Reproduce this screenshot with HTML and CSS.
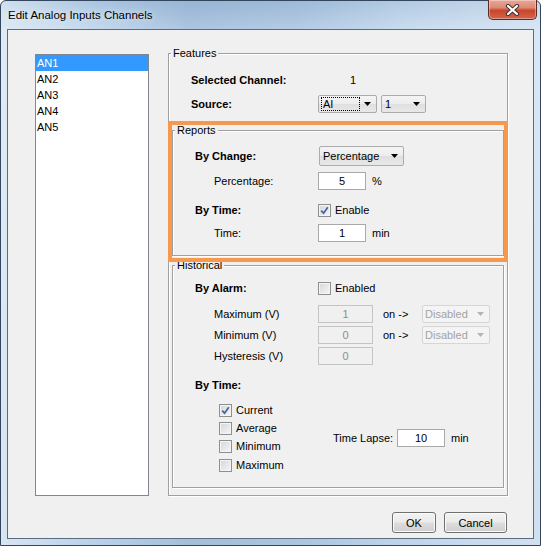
FILE: index.html
```html
<!DOCTYPE html>
<html lang="en-US">
  <head>
    <title>Edit Analog Inputs Channels</title>
    <link rel="stylesheet" href="styles.css">
  </head>
  <body>
    <div class="window">
      <div class="titlebar">
        <span class="title">Edit Analog Inputs Channels</span>
        <button class="close" type="button" aria-label="Close">
          <svg width="15" height="12" viewBox="0 0 15 12">
            <path d="M3 2 L12 10 M12 2 L3 10" stroke="#3b3034" stroke-width="4.2" stroke-linecap="round"/>
            <path d="M3 2 L12 10 M12 2 L3 10" stroke="#fff" stroke-width="2.2" stroke-linecap="round"/>
          </svg>
        </button>
      </div>

      <div class="client">
        <div class="main">
          <ul class="channels">
            <li class="selected">AN1</li>
            <li>AN2</li>
            <li>AN3</li>
            <li>AN4</li>
            <li>AN5</li>
          </ul>

          <fieldset class="group features">
            <legend>Features</legend>
            <div class="row tall sp-11">
              <span class="label bold">Selected Channel:</span>
              <span class="value">1</span>
            </div>
            <div class="row tall sp-4">
              <span class="label bold">Source:</span>
              <span class="combo combo-ai"><span class="focus">AI</span><svg class="arrow" width="7" height="4"><polygon points="0,0 7,0 3.5,4" fill="#000"/></svg></span>
              <span class="combo combo-num">1<svg class="arrow" width="7" height="4"><polygon points="0,0 7,0 3.5,4" fill="#000"/></svg></span>
            </div>

            <div class="highlight">
              <fieldset class="group reports">
                <legend>Reports</legend>
                <div class="row tall">
                  <span class="label bold">By Change:</span>
                  <span class="combo combo-mode">Percentage<svg class="arrow" width="7" height="4"><polygon points="0,0 7,0 3.5,4" fill="#000"/></svg></span>
                </div>
                <div class="row sp-6">
                  <span class="label sub">Percentage:</span>
                  <input class="field" type="text" value="5">
                  <span class="unit">%</span>
                </div>
                <div class="row sp-11">
                  <span class="label bold">By Time:</span>
                  <span class="check checked"><svg width="11" height="11"><path d="M2.2 5.6 L4.6 8.2 L8.8 2.2" fill="none" stroke="#47639c" stroke-width="1.7"/></svg></span>
                  <span class="check-text">Enable</span>
                </div>
                <div class="row sp-5">
                  <span class="label sub">Time:</span>
                  <input class="field" type="text" value="1">
                  <span class="unit">min</span>
                </div>
              </fieldset>
            </div>

            <fieldset class="group historical">
              <legend>Historical</legend>
              <div class="row">
                <span class="label bold">By Alarm:</span>
                <span class="check"></span>
                <span class="check-text">Enabled</span>
              </div>
              <div class="row sp-8">
                <span class="label sub">Maximum (V)</span>
                <input class="field wide" type="text" value="1" disabled>
                <span class="on">on -&gt;</span>
                <span class="combo combo-off">Disabled<svg class="arrow" width="7" height="4"><polygon points="0,0 7,0 3.5,4" fill="#b4b4b4"/></svg></span>
              </div>
              <div class="row sp-3">
                <span class="label sub">Minimum (V)</span>
                <input class="field wide" type="text" value="0" disabled>
                <span class="on">on -&gt;</span>
                <span class="combo combo-off">Disabled<svg class="arrow" width="7" height="4"><polygon points="0,0 7,0 3.5,4" fill="#b4b4b4"/></svg></span>
              </div>
              <div class="row sp-3">
                <span class="label sub">Hysteresis (V)</span>
                <input class="field wide" type="text" value="0" disabled>
              </div>
              <div class="row sp-11">
                <span class="label bold">By Time:</span>
              </div>
              <div class="lapse">
                <div class="checks">
                  <div class="row">
                    <span class="check checked"><svg width="11" height="11"><path d="M2.2 5.6 L4.6 8.2 L8.8 2.2" fill="none" stroke="#47639c" stroke-width="1.7"/></svg></span>
                    <span class="check-text">Current</span>
                  </div>
                  <div class="row">
                    <span class="check"></span>
                    <span class="check-text">Average</span>
                  </div>
                  <div class="row">
                    <span class="check"></span>
                    <span class="check-text">Minimum</span>
                  </div>
                  <div class="row sp-1">
                    <span class="check"></span>
                    <span class="check-text">Maximum</span>
                  </div>
                </div>
                <span class="lapse-label">Time Lapse:</span>
                <input class="field" type="text" value="10">
                <span class="unit">min</span>
              </div>
            </fieldset>
          </fieldset>
        </div>

        <div class="buttons">
          <button class="btn ok" type="button">OK</button>
          <button class="btn cancel" type="button">Cancel</button>
        </div>
      </div>
    </div>
  </body>
</html>
```

FILE: styles.css
```css
* {
  box-sizing: border-box;
}

body {
  margin: 0;
  font-family: "Liberation Sans", Arial, sans-serif;
  font-size: 11px;
  color: #000;
}

/* aero frame */
.window {
  width: 541px;
  height: 546px;
  padding: 0 6px 6px;
  border: 1px solid #34465b;
  border-radius: 6px 6px 0 0;
  background:
    linear-gradient(90deg, rgba(255,255,255,.45) 0, rgba(255,255,255,0) 18%, rgba(70,110,160,.18) 35%, rgba(70,110,160,.12) 55%, rgba(255,255,255,.1) 75%, rgba(255,255,255,.35) 100%),
    linear-gradient(#a9c4e0, #c6daee 30px, #b9d0e8 100%);
}

.titlebar {
  display: flex;
  align-items: flex-start;
  height: 28px;
}

.title {
  padding-left: 1px;
  line-height: 28px;
  font-size: 11.5px;
  text-shadow: 0 0 6px rgba(255,255,255,.9);
}

.close {
  display: flex;
  align-items: center;
  justify-content: center;
  width: 49px;
  height: 20px;
  margin: -1px -3px 0 auto;
  padding: 0 0 0 0;
  border: 1px solid #5b2a22;
  border-top: none;
  border-radius: 0 0 5px 5px;
  background: linear-gradient(#e9a797 0%, #dc8a75 40%, #c7462c 55%, #d2664a 100%);
  box-shadow: inset 0 0 0 1px rgba(255,255,255,.35);
}

.client {
  display: flex;
  flex-direction: column;
  height: 510px;
  border: 1px solid #596c82;
  background: #f0f0f0;
}

.main {
  display: flex;
  align-items: flex-start;
}

.channels {
  width: 114px;
  height: 442px;
  margin: 24px 0 0 27px;
  padding: 0;
  list-style: none;
  border: 1px solid #828790;
  background: #fff;
}

.channels li {
  height: 16px;
  padding-left: 1px;
  line-height: 16px;
}

.channels li.selected {
  background: #3399ff;
  color: #fff;
}

/* etched group boxes */
.group {
  min-width: 0;
  margin: 0;
  padding: 0;
  border: 1px solid #a0a0a0;
  box-shadow: inset 1px 1px 0 #fff, 1px 1px 0 #fff;
}

.group legend {
  margin-left: 2px;
  padding: 0 2px;
  line-height: 11px;
  background: #f0f0f0;
}

.features {
  width: 340px;
  margin: 18px 0 0 19px;
  padding: 0 0 7px 22px;
}

.features > legend {
  margin-left: -20px;
}

.features > .row .label {
  width: 127px;
}

.value {
  margin-left: 32px;
}

.highlight {
  margin: 11px 3px 0 -19px;
  padding-bottom: 2px;
  outline: 4px solid #f7984c;
}

.reports {
  padding: 10px 0 13px 22px;
}

.historical {
  margin: 2px 3px 0 -19px;
  padding: 8px 0 13px 22px;
}

.reports > legend,
.historical > legend {
  margin-left: -20px;
}

/* form rows */
.row {
  display: flex;
  align-items: center;
  height: 18px;
}

.row.tall {
  height: 20px;
}

.sp-1 { margin-top: 1px; }
.sp-3 { margin-top: 3px; }
.sp-4 { margin-top: 4px; }
.sp-5 { margin-top: 5px; }
.sp-6 { margin-top: 6px; }
.sp-8 { margin-top: 8px; }
.sp-11 { margin-top: 11px; }

.label {
  flex: none;
  width: 123px;
}

.label.sub {
  width: 104px;
  margin-left: 19px;
}

.bold {
  font-weight: bold;
}

.field {
  width: 48px;
  height: 18px;
  padding: 0;
  border: 1px solid #a9a9a9;
  background: #fff;
  font: 11px "Liberation Sans", Arial, sans-serif;
  color: #000;
  text-align: center;
}

.field.wide {
  width: 55px;
}

.field:disabled {
  border-color: #c4c4c4;
  background: #f0f0f0;
  color: #8d8d8d;
}

.unit {
  margin-left: 6px;
}

.on {
  width: 49px;
  padding-left: 10px;
}

/* drop-down boxes */
.combo {
  display: inline-flex;
  align-items: center;
  height: 18px;
  padding-left: 2px;
  border: 1px solid #acacac;
  border-radius: 2px;
  background: linear-gradient(#f4f4f4, #ececec 50%, #dfdfdf 51%, #e8e8e8);
}

.combo .arrow {
  margin-left: auto;
  margin-right: 5px;
}

.combo-ai {
  width: 59px;
}

.combo-ai .focus {
  width: 39px;
  height: 14px;
  line-height: 12px;
  padding-left: 1px;
  border: 1px dotted #000;
}

.combo-num {
  width: 45px;
  margin-left: 4px;
  padding-left: 3px;
}

.combo-mode {
  width: 85px;
  height: 20px;
  margin-left: 1px;
  padding-left: 3px;
}

.combo-off {
  width: 68px;
  border-color: #d6d6d6;
  background: #f4f4f4;
  color: #a3a3a3;
}

/* check boxes */
.check {
  flex: none;
  display: flex;
  align-items: center;
  justify-content: center;
  width: 13px;
  height: 13px;
  border: 1px solid #8e8f8f;
  background: linear-gradient(135deg, #d4d6d9 0%, #f6f6f6 100%);
  box-shadow: inset 0 0 0 1px #f4f4f4;
}

.check-text {
  margin-left: 4px;
}

.lapse {
  display: flex;
  align-items: center;
  margin-top: 7px;
  padding-left: 24px;
}

.checks {
  width: 114px;
}

.lapse-label {
  width: 64px;
}

/* dialog buttons */
.buttons {
  display: flex;
  justify-content: flex-end;
  gap: 8px;
  margin-top: 16px;
  padding-right: 26px;
}

.btn {
  height: 21px;
  padding: 0;
  border: 1px solid #707070;
  border-radius: 3px;
  background: linear-gradient(#f2f2f2 0%, #ebebeb 48%, #dddddd 52%, #cfcfcf 100%);
  box-shadow: inset 0 0 0 1px #fbfbfb;
  font: 11px "Liberation Sans", Arial, sans-serif;
  color: #000;
}

.btn.ok {
  width: 44px;
}

.btn.cancel {
  width: 63px;
}
```
